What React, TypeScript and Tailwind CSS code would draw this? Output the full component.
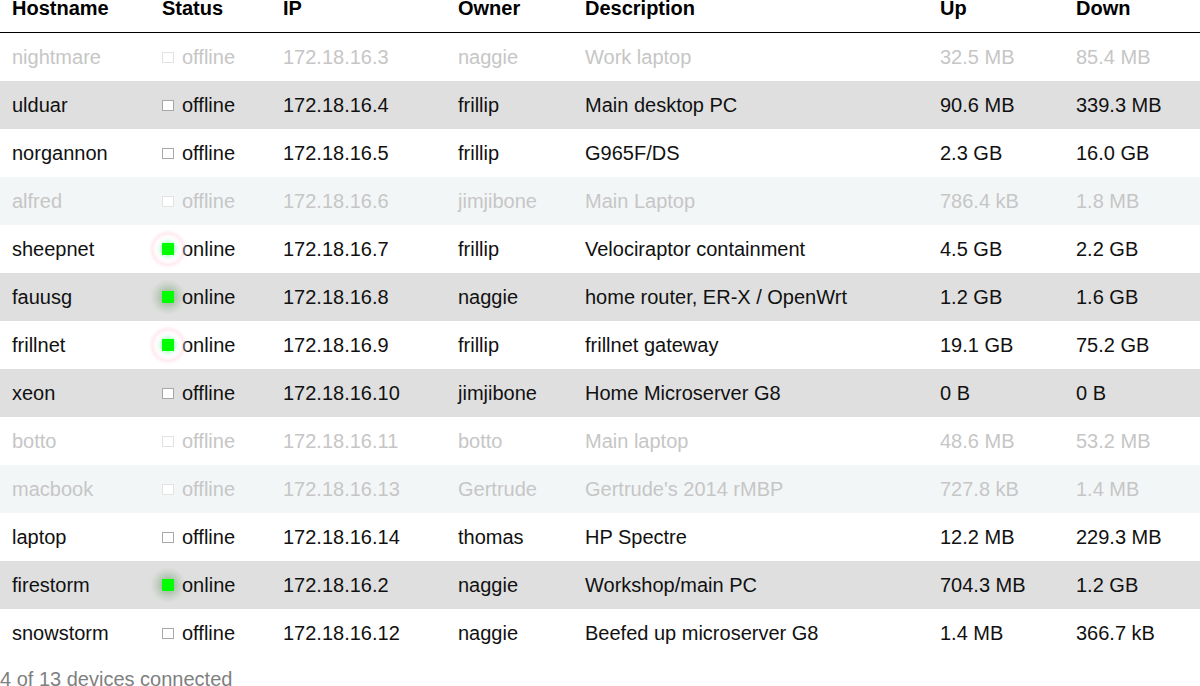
import React from "react";

type Device = {
    host: string;
    online: boolean;
    ip: string;
    owner: string;
    desc: string;
    up: string;
    down: string;
    stale?: boolean;
};

const devices: Device[] = [
    { host: "nightmare", online: false, ip: "172.18.16.3", owner: "naggie", desc: "Work laptop", up: "32.5 MB", down: "85.4 MB", stale: true },
    { host: "ulduar", online: false, ip: "172.18.16.4", owner: "frillip", desc: "Main desktop PC", up: "90.6 MB", down: "339.3 MB" },
    { host: "norgannon", online: false, ip: "172.18.16.5", owner: "frillip", desc: "G965F/DS", up: "2.3 GB", down: "16.0 GB" },
    { host: "alfred", online: false, ip: "172.18.16.6", owner: "jimjibone", desc: "Main Laptop", up: "786.4 kB", down: "1.8 MB", stale: true },
    { host: "sheepnet", online: true, ip: "172.18.16.7", owner: "frillip", desc: "Velociraptor containment", up: "4.5 GB", down: "2.2 GB" },
    { host: "fauusg", online: true, ip: "172.18.16.8", owner: "naggie", desc: "home router, ER-X / OpenWrt", up: "1.2 GB", down: "1.6 GB" },
    { host: "frillnet", online: true, ip: "172.18.16.9", owner: "frillip", desc: "frillnet gateway", up: "19.1 GB", down: "75.2 GB" },
    { host: "xeon", online: false, ip: "172.18.16.10", owner: "jimjibone", desc: "Home Microserver G8", up: "0 B", down: "0 B" },
    { host: "botto", online: false, ip: "172.18.16.11", owner: "botto", desc: "Main laptop", up: "48.6 MB", down: "53.2 MB", stale: true },
    { host: "macbook", online: false, ip: "172.18.16.13", owner: "Gertrude", desc: "Gertrude's 2014 rMBP", up: "727.8 kB", down: "1.4 MB", stale: true },
    { host: "laptop", online: false, ip: "172.18.16.14", owner: "thomas", desc: "HP Spectre", up: "12.2 MB", down: "229.3 MB" },
    { host: "firestorm", online: true, ip: "172.18.16.2", owner: "naggie", desc: "Workshop/main PC", up: "704.3 MB", down: "1.2 GB" },
    { host: "snowstorm", online: false, ip: "172.18.16.12", owner: "naggie", desc: "Beefed up microserver G8", up: "1.4 MB", down: "366.7 kB" },
];

const cols = "grid grid-cols-[150px_121px_175px_127px_355px_136px_1fr]";

const StatusDot = ({ online, stale, even }: { online: boolean; stale?: boolean; even: boolean }) => {
    if (!online) {
        return (
            <span className={`inline-block w-[12px] h-[11px] border bg-white ${stale ? "border-[#e2e2e2]" : "border-[#a8a8a8]"}`} />
        );
    }
    return (
        <span className="relative inline-block w-[12px] h-[12px]">
            {/* glow */}
            {even ? (
                <span className="absolute -inset-[12px] rounded-full bg-[radial-gradient(circle,rgba(40,120,40,0.3)_22%,rgba(40,120,40,0.1)_50%,transparent_70%)]" />
            ) : (
                <span className="absolute -inset-[14px] rounded-full bg-[radial-gradient(circle,rgba(80,255,140,0.4)_20%,rgba(200,255,220,0.15)_36%,rgba(255,240,245,0.3)_46%,rgba(255,205,220,0.4)_56%,rgba(255,225,235,0.2)_64%,transparent_70%)]" />
            )}
            <span className="absolute inset-0 bg-[#00ff00]" />
        </span>
    );
};

export default function App() {
    const online = devices.filter((d) => d.online).length;

    return (
        <div className="w-[1200px] h-[686px] overflow-hidden bg-white font-['Liberation_Sans',Arial,sans-serif] text-[20px] text-[#111]">
            {/* Header */}
            <div className={`${cols} h-[33px] border-b border-black items-start font-bold text-black`}>
                {["Hostname", "Status", "IP", "Owner", "Description", "Up", "Down"].map((h) => (
                    <div key={h} className="pl-3 -mt-[3px] leading-[23px]">{h}</div>
                ))}
            </div>

            {/* Rows */}
            {devices.map((d, i) => {
                const even = i % 2 === 1;
                const bg = even ? (d.stale ? "bg-[#f3f6f7]" : "bg-[#dfdfdf]") : "bg-white";
                const fg = d.stale ? "text-[#c6c6c6]" : "text-[#111]";
                return (
                    <div key={d.host} className={`${cols} h-12 items-center leading-[23px] ${bg} ${fg}`}>
                        <div className="pl-3">{d.host}</div>
                        <div className="pl-3 flex items-center gap-2">
                            <StatusDot online={d.online} stale={d.stale} even={even} />
                            <span>{d.online ? "online" : "offline"}</span>
                        </div>
                        <div className="pl-3">{d.ip}</div>
                        <div className="pl-3">{d.owner}</div>
                        <div className="pl-3 whitespace-nowrap">{d.desc}</div>
                        <div className="pl-3">{d.up}</div>
                        <div className="pl-3">{d.down}</div>
                    </div>
                );
            })}

            <div className="mt-[11px] leading-[23px] text-[#808080]">
                {online} of {devices.length} devices connected
            </div>
        </div>
    );
}
